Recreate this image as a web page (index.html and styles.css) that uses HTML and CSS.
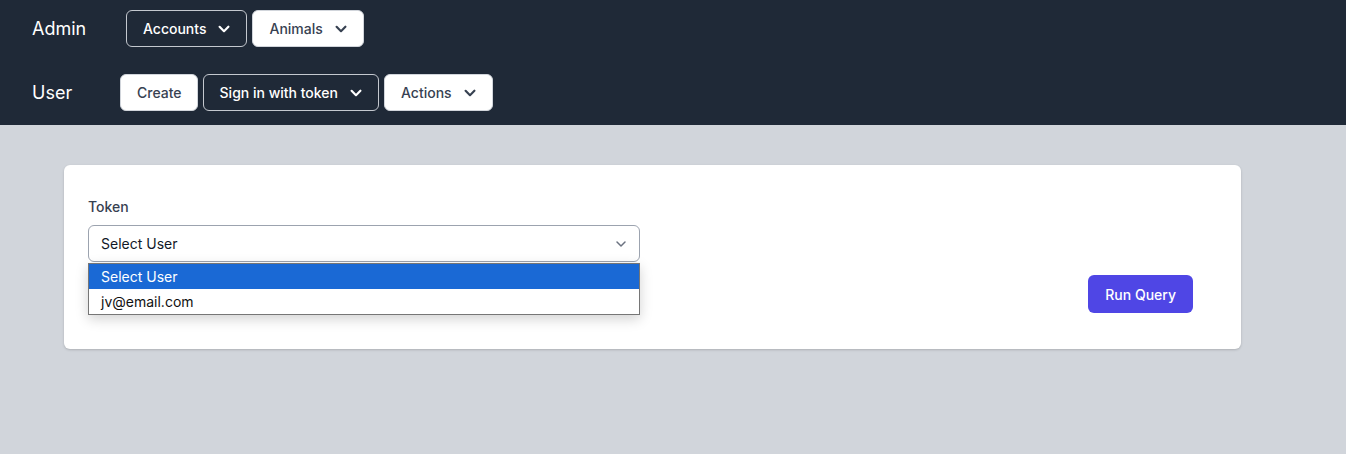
FILE: index.html
```html
<!DOCTYPE html>
<html>
<head>
<meta charset="utf-8">
<link rel="stylesheet" href="styles.css">
</head>
<body>
<header class="topbar">
  <div class="nav-row nav-row-admin">
    <div class="nav-label label-admin">Admin</div>
    <div class="btn-group">
      <button class="btn btn-dark">Accounts<svg class="chev" viewBox="0 0 20 20" fill="currentColor"><path fill-rule="evenodd" d="M5.293 7.293a1 1 0 011.414 0L10 10.586l3.293-3.293a1 1 0 111.414 1.414l-4 4a1 1 0 01-1.414 0l-4-4a1 1 0 010-1.414z" clip-rule="evenodd"/></svg></button>
      <button class="btn btn-light">Animals<svg class="chev" viewBox="0 0 20 20" fill="currentColor"><path fill-rule="evenodd" d="M5.293 7.293a1 1 0 011.414 0L10 10.586l3.293-3.293a1 1 0 111.414 1.414l-4 4a1 1 0 01-1.414 0l-4-4a1 1 0 010-1.414z" clip-rule="evenodd"/></svg></button>
    </div>
  </div>
  <div class="nav-row nav-row-user">
    <div class="nav-label label-user">User</div>
    <div class="btn-group">
      <button class="btn btn-light btn-plain">Create</button>
      <button class="btn btn-dark">Sign in with token<svg class="chev" viewBox="0 0 20 20" fill="currentColor"><path fill-rule="evenodd" d="M5.293 7.293a1 1 0 011.414 0L10 10.586l3.293-3.293a1 1 0 111.414 1.414l-4 4a1 1 0 01-1.414 0l-4-4a1 1 0 010-1.414z" clip-rule="evenodd"/></svg></button>
      <button class="btn btn-light">Actions<svg class="chev" viewBox="0 0 20 20" fill="currentColor"><path fill-rule="evenodd" d="M5.293 7.293a1 1 0 011.414 0L10 10.586l3.293-3.293a1 1 0 111.414 1.414l-4 4a1 1 0 01-1.414 0l-4-4a1 1 0 010-1.414z" clip-rule="evenodd"/></svg></button>
    </div>
  </div>
</header>
<main class="content">
  <section class="card">
    <div class="field">
      <label class="field-label">Token</label>
      <div class="select-wrap">
        <div class="select">
          <span class="select-value">Select User</span>
          <svg class="select-chev" viewBox="0 0 16 16" fill="none" stroke="currentColor" stroke-width="1.5" stroke-linecap="round" stroke-linejoin="round"><path d="M4 6l4 4 4-4"/></svg>
        </div>
        <div class="dropdown">
          <div class="option option-active">Select User</div>
          <div class="option">jv@email.com</div>
        </div>
      </div>
    </div>
    <div class="actions">
      <button class="btn-primary">Run Query</button>
    </div>
  </section>
</main>
</body>
</html>
```
FILE: styles.css
```css
* { box-sizing: border-box; }
html, body {
  margin: 0;
  padding: 0;
}
body {
  font-family: Inter, "Noto Sans", sans-serif;
  background: #d1d5db;
  height: 454px;
  overflow: hidden;
}
.topbar {
  background: #1f2937;
  height: 125px;
  padding: 10px 0 0 32px;
}
.nav-row {
  display: flex;
  align-items: center;
  height: 37px;
}
.nav-row-user {
  margin-top: 27px;
}
.nav-label {
  color: #ffffff;
  font-size: 18px;
  line-height: 24px;
}
.label-admin { width: 94px; }
.label-user { width: 88px; }
.btn-group {
  display: flex;
  gap: 5px;
}
.btn {
  display: flex;
  align-items: center;
  height: 37px;
  padding: 0 11px 0 16px;
  border-radius: 6px;
  font-family: Inter, "Noto Sans", sans-serif;
  font-size: 14px;
  font-weight: 500;
  line-height: 20px;
  border: 1px solid #d1d5db;
  cursor: pointer;
}
.btn-plain { padding: 0 15px 0 16px; }
.btn-dark {
  background: #1f2937;
  color: #ffffff;
  border-color: #c4c8cf;
}
.btn-light {
  background: #ffffff;
  color: #374151;
}
.chev {
  width: 22px;
  height: 22px;
  margin-left: 7px;
}
.content {
  padding: 40px 0 0 64px;
}
.card {
  width: 1177px;
  background: #ffffff;
  border-radius: 6px;
  box-shadow: 0 1px 3px rgba(0,0,0,0.12), 0 1px 2px rgba(0,0,0,0.06);
  padding: 32px 48px 36px 24px;
}
.field-label {
  display: block;
  font-size: 14px;
  line-height: 20px;
  font-weight: 500;
  color: #374151;
  margin-bottom: 8px;
}
.select-wrap {
  position: relative;
  width: 552px;
}
.select {
  display: flex;
  align-items: center;
  justify-content: space-between;
  height: 37px;
  border: 1px solid #9ca3af;
  border-radius: 6px;
  padding: 0 10px 0 12px;
  font-size: 14px;
  color: #111827;
  background: #ffffff;
}
.select-chev {
  width: 16px;
  height: 16px;
  color: #6b7280;
}
.dropdown {
  position: absolute;
  left: 0;
  top: 38px;
  width: 552px;
  background: #ffffff;
  border: 1px solid #767676;
  box-shadow: 0 4px 12px rgba(0,0,0,0.18);
  z-index: 5;
}
.option {
  height: 25px;
  line-height: 25px;
  padding-left: 12px;
  font-size: 14px;
  color: #111111;
}
.option-active {
  background: #1a69d5;
  color: #ffffff;
}
.actions {
  display: flex;
  justify-content: flex-end;
  margin-top: 13px;
}
.btn-primary {
  height: 38px;
  padding: 0 17px;
  border: none;
  border-radius: 6px;
  background: #4f46e5;
  color: #ffffff;
  font-family: Inter, "Noto Sans", sans-serif;
  font-size: 14px;
  font-weight: 500;
  cursor: pointer;
}
```
